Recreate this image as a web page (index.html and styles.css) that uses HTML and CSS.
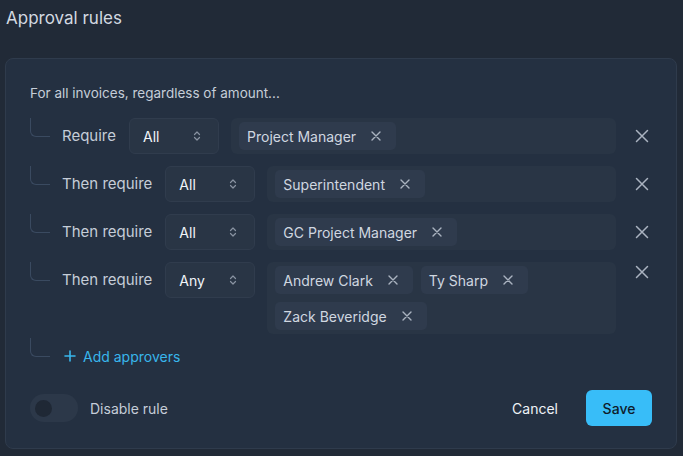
FILE: index.html
```html
<!DOCTYPE html>
<html lang="en">
<head>
<meta charset="utf-8">
<title>Approval rules</title>
<link rel="stylesheet" href="styles.css">
</head>
<body>
<div class="page">
  <h1 class="title">Approval rules</h1>
  <section class="card">
    <p class="intro">For all invoices, regardless of amount...</p>
    <div class="rules">
      <div class="rule">
        <span class="conn"></span>
        <span class="label">Require</span>
        <div class="select"><span>All</span><svg class="chev" viewBox="0 0 8 12" width="8" height="12"><path d="M1.5 4.5L4 2L6.5 4.5M1.5 7.5L4 10L6.5 7.5" fill="none" stroke="currentColor" stroke-width="1.2" stroke-linecap="round" stroke-linejoin="round"/></svg></div>
        <div class="tags">
          <span class="chip">Project Manager<svg class="chip-x" viewBox="0 0 10 10" width="10" height="10"><path d="M1 1L9 9M9 1L1 9" stroke="currentColor" stroke-width="1.4" stroke-linecap="round"/></svg></span>
        </div>
        <button class="remove"><svg viewBox="0 0 14 14" width="14" height="14"><path d="M1.5 1.5L12.5 12.5M12.5 1.5L1.5 12.5" stroke="currentColor" stroke-width="1.5" stroke-linecap="round"/></svg></button>
      </div>
      <div class="rule">
        <span class="conn"></span>
        <span class="label">Then require</span>
        <div class="select"><span>All</span><svg class="chev" viewBox="0 0 8 12" width="8" height="12"><path d="M1.5 4.5L4 2L6.5 4.5M1.5 7.5L4 10L6.5 7.5" fill="none" stroke="currentColor" stroke-width="1.2" stroke-linecap="round" stroke-linejoin="round"/></svg></div>
        <div class="tags">
          <span class="chip">Superintendent<svg class="chip-x" viewBox="0 0 10 10" width="10" height="10"><path d="M1 1L9 9M9 1L1 9" stroke="currentColor" stroke-width="1.4" stroke-linecap="round"/></svg></span>
        </div>
        <button class="remove"><svg viewBox="0 0 14 14" width="14" height="14"><path d="M1.5 1.5L12.5 12.5M12.5 1.5L1.5 12.5" stroke="currentColor" stroke-width="1.5" stroke-linecap="round"/></svg></button>
      </div>
      <div class="rule">
        <span class="conn"></span>
        <span class="label">Then require</span>
        <div class="select"><span>All</span><svg class="chev" viewBox="0 0 8 12" width="8" height="12"><path d="M1.5 4.5L4 2L6.5 4.5M1.5 7.5L4 10L6.5 7.5" fill="none" stroke="currentColor" stroke-width="1.2" stroke-linecap="round" stroke-linejoin="round"/></svg></div>
        <div class="tags">
          <span class="chip">GC Project Manager<svg class="chip-x" viewBox="0 0 10 10" width="10" height="10"><path d="M1 1L9 9M9 1L1 9" stroke="currentColor" stroke-width="1.4" stroke-linecap="round"/></svg></span>
        </div>
        <button class="remove"><svg viewBox="0 0 14 14" width="14" height="14"><path d="M1.5 1.5L12.5 12.5M12.5 1.5L1.5 12.5" stroke="currentColor" stroke-width="1.5" stroke-linecap="round"/></svg></button>
      </div>
      <div class="rule">
        <span class="conn"></span>
        <span class="label">Then require</span>
        <div class="select"><span>Any</span><svg class="chev" viewBox="0 0 8 12" width="8" height="12"><path d="M1.5 4.5L4 2L6.5 4.5M1.5 7.5L4 10L6.5 7.5" fill="none" stroke="currentColor" stroke-width="1.2" stroke-linecap="round" stroke-linejoin="round"/></svg></div>
        <div class="tags">
          <span class="chip">Andrew Clark<svg class="chip-x" viewBox="0 0 10 10" width="10" height="10"><path d="M1 1L9 9M9 1L1 9" stroke="currentColor" stroke-width="1.4" stroke-linecap="round"/></svg></span>
          <span class="chip">Ty Sharp<svg class="chip-x" viewBox="0 0 10 10" width="10" height="10"><path d="M1 1L9 9M9 1L1 9" stroke="currentColor" stroke-width="1.4" stroke-linecap="round"/></svg></span>
          <span class="chip">Zack Beveridge<svg class="chip-x" viewBox="0 0 10 10" width="10" height="10"><path d="M1 1L9 9M9 1L1 9" stroke="currentColor" stroke-width="1.4" stroke-linecap="round"/></svg></span>
        </div>
        <button class="remove remove-top"><svg viewBox="0 0 14 14" width="14" height="14"><path d="M1.5 1.5L12.5 12.5M12.5 1.5L1.5 12.5" stroke="currentColor" stroke-width="1.5" stroke-linecap="round"/></svg></button>
      </div>
    </div>
    <div class="add-row">
      <span class="conn"></span>
      <button class="add"><svg viewBox="0 0 12 12" width="12" height="12"><path d="M6 1V11M1 6H11" stroke="currentColor" stroke-width="1.6" stroke-linecap="round"/></svg>Add approvers</button>
    </div>
    <div class="footer">
      <div class="toggle-wrap">
        <span class="toggle"><span class="knob"></span></span>
        <span class="toggle-label">Disable rule</span>
      </div>
      <div class="actions">
        <button class="btn-cancel">Cancel</button>
        <button class="btn-save">Save</button>
      </div>
    </div>
  </section>
</div>
</body>
</html>
```

FILE: styles.css
```css
* { box-sizing: border-box; }
html, body {
  margin: 0;
  padding: 0;
  background: #212a37;
  font-family: Inter, "Noto Sans", sans-serif;
  color: #c5cdd8;
}
.page {
  padding: 4px 6px 0 5px;
}
.title {
  margin: 0 0 26px 1px;
  font-size: 17px;
  line-height: 28px;
  font-weight: 400;
  color: #d3d9e1;
}
.card {
  background: #243041;
  border: 1px solid #2f3b4c;
  border-radius: 8px;
  padding: 24px 24px 22px 24px;
}
.intro {
  margin: 0 0 15px 0;
  font-size: 13.5px;
  line-height: 20px;
  color: #c5cdd8;
}
.rules {
  display: flex;
  flex-direction: column;
  gap: 12px;
}
.rule {
  display: flex;
  align-items: flex-start;
  gap: 12px;
}
.conn {
  flex: none;
  width: 20px;
  height: 19px;
  border-left: 1.5px solid #3a4a60;
  border-bottom: 1.5px solid #3a4a60;
  border-bottom-left-radius: 6px;
}
.label {
  flex: none;
  font-size: 15px;
  line-height: 36px;
  color: #c5cdd8;
  margin-right: 1px;
}
.select {
  flex: none;
  width: 90px;
  height: 36px;
  display: flex;
  align-items: center;
  justify-content: space-between;
  padding: 0 17px 0 13px;
  background: #293545;
  border: 1px solid #303c4d;
  border-radius: 6px;
  font-size: 14px;
  color: #f1f5f9;
}
.chev { color: #8993a2; }
.tags {
  flex: 1;
  min-height: 36px;
  display: flex;
  flex-wrap: wrap;
  gap: 8px;
  padding: 4px 8px;
  background: #293545;
  border-radius: 6px;
}
.chip {
  display: inline-flex;
  align-items: center;
  gap: 15px;
  height: 28px;
  padding: 0 15px 0 8px;
  background: #2f3b4d;
  border-radius: 5px;
  font-size: 14px;
  color: #d0d7e0;
}
.chip-x { color: #aab3c0; }
.remove {
  flex: none;
  width: 20px;
  height: 20px;
  margin: 8px 0 0 4px;
  padding: 0;
  display: flex;
  align-items: center;
  justify-content: center;
  background: none;
  border: 0;
  color: #aab3c0;
}
.remove-top { margin-top: 0; }
.add-row {
  display: flex;
  align-items: flex-start;
  gap: 14px;
  margin-top: 4px;
  height: 36px;
}
.add {
  display: flex;
  align-items: center;
  gap: 7px;
  height: 36px;
  padding: 0;
  background: none;
  border: 0;
  font-family: inherit;
  font-size: 14px;
  color: #38b6ec;
}
.footer {
  margin-top: 16px;
  display: flex;
  align-items: center;
  justify-content: space-between;
  height: 36px;
}
.toggle-wrap {
  display: flex;
  align-items: center;
  gap: 12px;
}
.toggle {
  width: 48px;
  height: 28px;
  border-radius: 14px;
  background: #2c3849;
  display: flex;
  align-items: center;
  padding-left: 5px;
}
.knob {
  width: 17px;
  height: 17px;
  border-radius: 50%;
  background: #1f2835;
}
.toggle-label {
  font-size: 14px;
  color: #c5cdd8;
}
.actions {
  display: flex;
  align-items: center;
  gap: 12px;
}
.btn-cancel {
  height: 36px;
  padding: 0 16px;
  background: none;
  border: 0;
  font-family: inherit;
  font-size: 14px;
  font-weight: 400;
  color: #eef2f6;
}
.btn-save {
  width: 66px;
  height: 36px;
  background: #38bdf8;
  border: 0;
  border-radius: 6px;
  font-family: inherit;
  font-size: 14px;
  font-weight: 500;
  color: #0f1b2b;
}
```
